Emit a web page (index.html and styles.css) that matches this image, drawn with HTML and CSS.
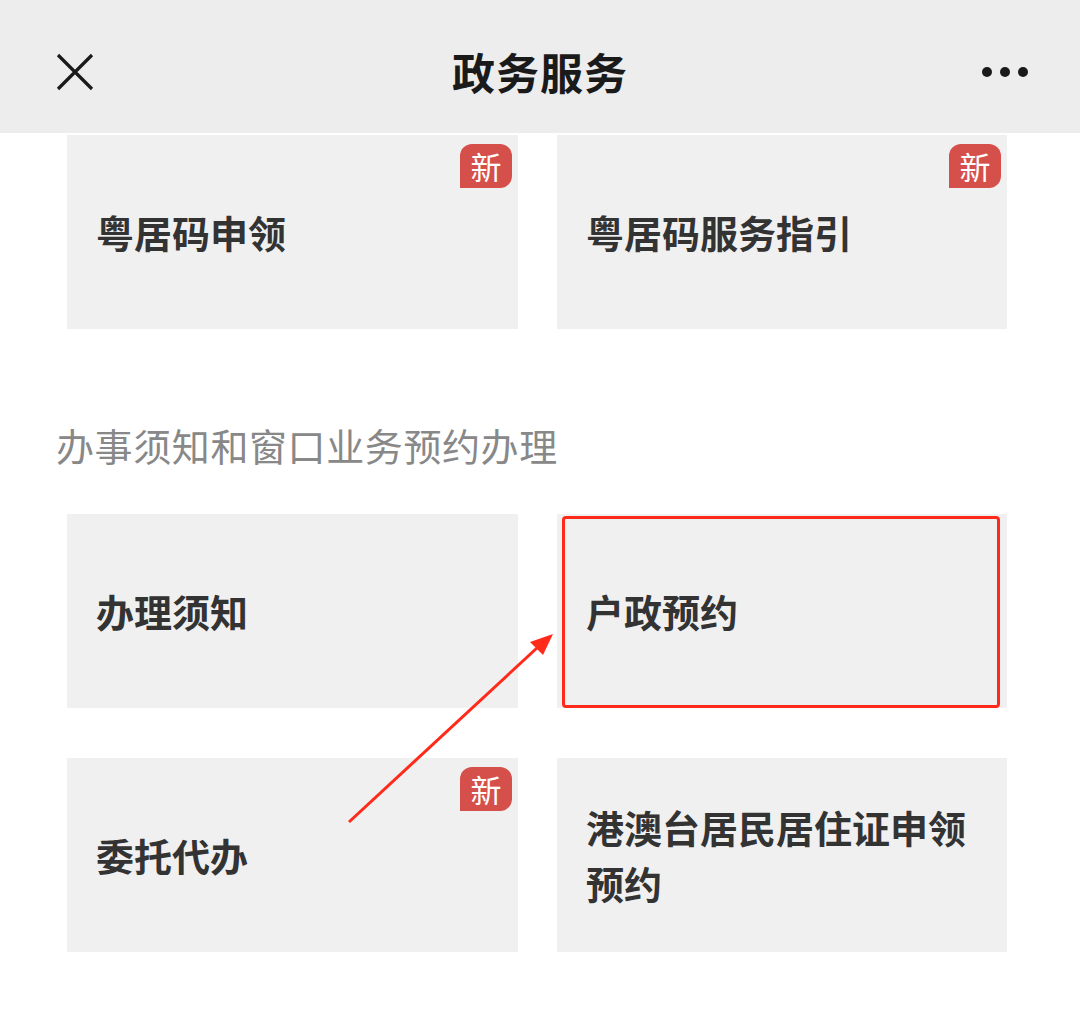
FILE: index.html
```html
<!DOCTYPE html>
<html lang="zh-CN">
<head>
<meta charset="utf-8">
<title>政务服务</title>
<link rel="stylesheet" href="styles.css">
</head>
<body>
<div class="page">
  <header class="bar">
    <svg class="close" width="38" height="38" viewBox="0 0 38 38"><path d="M2 2 L36 36 M36 2 L2 36" stroke="#1a1a1a" stroke-width="3.2" fill="none"/></svg>
    <h1 class="title">政务服务</h1>
    <div class="more"><span></span><span></span><span></span></div>
  </header>
  <main class="content">
    <div class="grid">
      <div class="card"><span class="name">粤居码申领</span><span class="badge">新</span></div>
      <div class="card"><span class="name">粤居码服务指引</span><span class="badge">新</span></div>
    </div>
    <h2 class="section">办事须知和窗口业务预约办理</h2>
    <div class="grid">
      <div class="card"><span class="name">办理须知</span></div>
      <div class="card"><span class="name">户政预约</span><span class="highlight"></span></div>
      <div class="card"><span class="name">委托代办</span><span class="badge">新</span></div>
      <div class="card"><span class="name">港澳台居民居住证申领<br>预约</span></div>
    </div>
  </main>
  <svg class="arrow" width="1080" height="1024" viewBox="0 0 1080 1024">
    <line x1="349" y1="822" x2="538" y2="647" stroke="#ff2a1a" stroke-width="3"/>
    <polygon points="553,634 530,642 543,655" fill="#ff2a1a"/>
  </svg>
</div>
</body>
</html>
```
FILE: styles.css
```css
html, body {
  margin: 0;
  padding: 0;
  background: #ffffff;
}
body {
  font-family: "Noto Sans CJK SC", "Noto Sans", sans-serif;
  width: 1080px;
  height: 1024px;
  overflow: hidden;
}
.page {
  position: relative;
  width: 1080px;
  height: 1024px;
}
.bar {
  height: 133px;
  background: #ededed;
  display: flex;
  align-items: center;
  justify-content: space-between;
  padding: 10px 52px 0 56px;
  box-sizing: border-box;
}
.close {
  display: block;
  width: 38px;
  height: 38px;
}
.title {
  margin: 0;
  font-size: 43px;
  font-weight: 700;
  color: #1a1a1a;
  letter-spacing: 1px;
  position: absolute;
  left: 0;
  right: 0;
  top: 42px;
  text-align: center;
  line-height: 58px;
  pointer-events: none;
}
.more {
  display: flex;
  gap: 8px;
  align-items: center;
}
.more span {
  width: 10px;
  height: 10px;
  border-radius: 50%;
  background: #1a1a1a;
}
.content {
  padding: 2px 73px 0 67px;
}
.grid {
  display: grid;
  grid-template-columns: 451px 450px;
  column-gap: 39px;
  row-gap: 50px;
}
.card {
  position: relative;
  height: 194px;
  background: #f0f0f0;
  display: flex;
  align-items: center;
  padding-left: 29px;
  box-sizing: border-box;
}
.name {
  font-size: 38px;
  font-weight: 700;
  color: #333333;
  line-height: 56px;
}
.badge {
  position: absolute;
  top: 9px;
  right: 6px;
  width: 52px;
  height: 44px;
  background: #d5504a;
  color: #ffffff;
  font-size: 31px;
  line-height: 44px;
  text-align: center;
  border-radius: 12px 12px 12px 0;
}
.highlight {
  position: absolute;
  left: 5px;
  top: 2px;
  width: 438px;
  height: 192px;
  border: 3px solid #ff2a1a;
  border-radius: 4px;
  box-sizing: border-box;
}
.section {
  margin: 91px 0 44px -11px;
  font-size: 38px;
  font-weight: 400;
  color: #888888;
  line-height: 50px;
  letter-spacing: 0.6px;
}
.arrow {
  position: absolute;
  left: 0;
  top: 0;
  pointer-events: none;
}
```
